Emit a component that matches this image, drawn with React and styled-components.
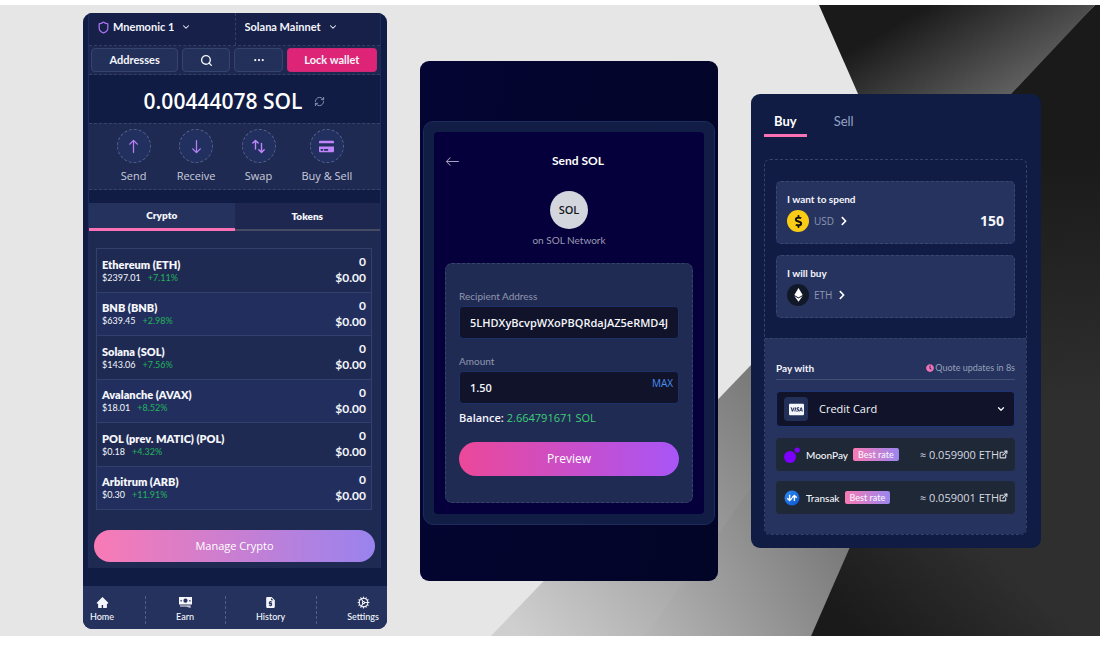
import React, { useState } from "react";
import styled, { createGlobalStyle, css } from "styled-components";
import { RefreshCw, Shield, Search, ChevronDown, Cog } from "lucide-react";
import { BsArrowUp, BsArrowDown, BsArrowLeft, BsThreeDots } from "react-icons/bs";
import { FaCcVisa, FaChevronRight, FaClock, FaCreditCard, FaDollarSign } from "react-icons/fa";
import { MdRequestQuote } from "react-icons/md";
import { AiFillHome } from "react-icons/ai";
import { FiExternalLink } from "react-icons/fi";

const GlobalStyle = createGlobalStyle`
  * { box-sizing: border-box; }
  body {
    margin: 0;
    background: #fff;
    color: #f5f6fb;
    font-family: "Open Sans", "Noto Sans", sans-serif;
    font-size: 11px;
    line-height: 16px;
  }
  button, input, select { font: inherit; color: inherit; margin: 0; }
  button { cursor: pointer; border: 0; padding: 0; background: none; }
  h1, h2, p { margin: 0; font-size: inherit; font-weight: inherit; }
  a { color: inherit; text-decoration: none; }
  svg { display: block; flex: none; }
`;

const compact = css`
  font-family: Lato, "Noto Sans", sans-serif;
`;

const Stage = styled.main`
  position: relative;
  margin: 5px 1px 20px 0;
  padding: 8px 59px 7px 83px;
  display: grid;
  grid-template-columns: minmax(0, 304fr) minmax(0, 298fr) minmax(0, 290fr);
  gap: 33px;
  align-items: center;
  background: #e6e6e6;
`;

const Backdrop = styled.svg`
  position: absolute;
  inset: 0;
  width: 100%;
  height: 100%;
`;

const Card = styled.section`
  position: relative;
  min-width: 0;
  border-radius: 9px;
  overflow: hidden;
  background: #101c44;
`;

/* ---------- wallet ---------- */

const WalletBody = styled.div`
  margin: 0 6px 18px 5px;
  border: solid #1b2c5f;
  border-width: 0 1px;
`;

const TopBar = styled.div`
  ${compact}
  display: grid;
  grid-template-columns: 1fr 1fr;
  height: 33px;
  background: #162049;
  border-bottom: 1px dashed #333f68;
`;

const Picker = styled.label`
  display: flex;
  align-items: center;
  gap: 3px;
  padding: 0 9px 4px 8px;
  font-weight: 700;
  & + & {
    padding-left: 9px;
    border-left: 1px dashed #333f68;
  }
`;

const BareSelect = styled.select`
  appearance: none;
  border: 0;
  padding: 0;
  background: none;
  outline: 0;
  min-width: 0;
  field-sizing: content;
  flex: ${(p) => (p.$grow ? "1" : "none")};
  option { color: #111; }
`;

const PickerArrow = styled(ChevronDown)`
  margin-left: 4px;
  pointer-events: none;
`;

const Toolbar = styled.div`
  ${compact}
  display: grid;
  grid-template-columns: 87fr 48fr 48fr 90fr;
  gap: 4px;
  height: 29px;
  padding: 2px 3px 2px 2px;
  background: #1d2750;
  border-bottom: 1px dashed #333f68;
`;

const ToolButton = styled.button`
  display: flex;
  align-items: center;
  justify-content: center;
  height: 24px;
  border-radius: 4px;
  border: 1px solid #35446f;
  background: #233059;
  font-weight: 700;
  ${(p) => p.$accent && css`
    background: #dd2476;
    border: 1px dashed #c22a78;
  `}
`;

const Balance = styled.div`
  display: flex;
  align-items: center;
  justify-content: center;
  gap: 12px;
  height: 48px;
  padding-top: 4px;
  color: #8e9ab8;
`;

const BalanceValue = styled.h1`
  color: #fff;
  font-size: 21px;
  line-height: 28px;
  font-weight: 600;
`;

const Actions = styled.div`
  display: flex;
  justify-content: center;
  gap: 26px;
  height: 67px;
  padding-top: 5px;
  background: #1f2a53;
  border: dashed #37436b;
  border-width: 1px 0;
`;

const Action = styled.button`
  display: flex;
  flex-direction: column;
  align-items: center;
  gap: 5px;
  color: #c9cdda;
`;

const ActionDisc = styled.span`
  display: grid;
  place-items: center;
  width: 34px;
  height: 34px;
  border-radius: 50%;
  border: 1px dashed #56608a;
  background: #22305f;
  color: #c084fc;
`;

const WalletTabs = styled.div`
  ${compact}
  display: grid;
  grid-template-columns: 1fr 1fr;
  height: 28px;
  margin-top: 13px;
`;

const WalletTab = styled.button`
  font-size: 10px;
  font-weight: 800;
  padding-bottom: 1px;
  background: ${(p) => (p.$active ? "#24325d" : "#1d2750")};
  border-bottom: ${(p) => (p.$active ? "3px solid #fb71b6" : "2px solid #454b63")};
`;

const AssetPanel = styled.div`
  padding: 17px 5px 6px;
  background: #1f2a53;
`;

const AssetTableWrap = styled.div`
  padding: 0 3px 0 2px;
`;

const AssetTable = styled.table`
  ${compact}
  width: 100%;
  height: 262px;
  border-collapse: collapse;
  border: 1px solid #32406c;
  th, td {
    padding: 0 5px;
    border-bottom: 1px solid #32406c;
    text-align: left;
    font-weight: 400;
    line-height: 14px;
  }
  td { text-align: right; font-size: 12px; font-weight: 700; line-height: 16px; }
  tr:nth-child(even) { background: #222f5e; }
`;

const AssetName = styled.div`
  font-size: 11px;
  font-weight: 800;
`;

const AssetQuote = styled.div`
  display: flex;
  gap: 7px;
  font-size: 9px;
  line-height: 11px;
  span { color: #22b45c; }
`;

const PillButton = styled.button`
  display: block;
  width: 100%;
  height: ${(p) => (p.$tall ? "34px" : "32px")};
  margin-top: ${(p) => (p.$tall ? "16px" : "20px")};
  border-radius: 17px;
  color: #fff;
  font-size: ${(p) => (p.$tall ? "12px" : "11px")};
  font-weight: 500;
  background: linear-gradient(90deg, ${(p) => p.$from}, ${(p) => p.$to});
`;

const BottomNav = styled.nav`
  ${compact}
  display: flex;
  justify-content: space-between;
  height: 43px;
  padding: 10px 8px 5px 7px;
  background: #24325d;
`;

const NavLink = styled.a`
  display: flex;
  flex-direction: column;
  align-items: center;
  gap: 1px;
  font-size: 9px;
  font-weight: 500;
  line-height: 14px;
`;

const NavRule = styled.span`
  border-left: 1px dashed #525e86;
`;

/* ---------- send ---------- */

const SendCard = styled(Card)`
  padding: 60px 3px 56px;
  background: linear-gradient(100deg, #040533 0%, #020526 100%);
`;

const SendFrame = styled.div`
  padding: 10px;
  border: 1px solid #1b2c5f;
  border-radius: 10px;
  background: #111d45;
`;

const SendInner = styled.div`
  padding: 19px 11px 11px;
  border-radius: 4px;
  background: #05003b;
`;

const SendHeader = styled.header`
  display: flex;
  align-items: center;
  gap: 3px;
  height: 20px;
  color: #9fa2bd;
`;

const SendTitle = styled.h2`
  ${compact}
  flex: 1;
  text-align: center;
  color: #fff;
  font-size: 12px;
  font-weight: 700;
`;

const CoinBadge = styled.div`
  display: grid;
  place-items: center;
  width: 38px;
  height: 38px;
  margin: 20px auto 0;
  border-radius: 50%;
  background: #d3d6dd;
  color: #14161d;
  font-weight: 600;
`;

const NetworkNote = styled.p`
  ${compact}
  margin: 3px 0 15px;
  text-align: center;
  font-size: 10px;
  color: #989bb2;
`;

const SendForm = styled.form`
  padding: 25px 13px 26px;
  border: 1px dashed #37436b;
  border-radius: 7px;
  background: #202b54;
`;

const FieldLabel = styled.label`
  ${compact}
  display: block;
  margin-bottom: 2px;
  font-size: 10px;
  line-height: 15px;
  color: #9097ad;
`;

const InputShell = styled.div`
  display: flex;
  height: 33px;
  margin-bottom: ${(p) => (p.$last ? "6px" : "15px")};
  padding: 0 5px 0 10px;
  border: 1px solid #1d3068;
  border-radius: 4px;
  background: #10132a;
`;

const TextInput = styled.input`
  flex: 1;
  min-width: 0;
  border: 0;
  padding: 0;
  outline: 0;
  background: none;
  font-size: ${(p) => (p.$large ? "14px" : "11px")};
  font-weight: ${(p) => (p.$large ? 700 : 600)};
  text-align: ${(p) => (p.$large ? "right" : "left")};
`;

const MaxButton = styled.button`
  align-self: flex-start;
  margin-top: 3px;
  font-size: 10px;
  color: #4b8ef0;
`;

const BalanceLine = styled.p`
  font-weight: 600;
  span { color: #3dcf74; font-weight: 400; }
`;

/* ---------- buy ---------- */

const BuyCard = styled(Card)`
  padding: 10px 14px 13px 13px;
`;

const BuyTabs = styled.div`
  ${compact}
  display: flex;
  gap: 17px;
  margin-bottom: 22px;
`;

const BuyTab = styled.button`
  height: 33px;
  padding: 3px 10px 0;
  font-size: 13px;
  font-weight: ${(p) => (p.$active ? 700 : 400)};
  color: ${(p) => (p.$active ? "#fff" : "#93a3c4")};
  border-bottom: 3px solid ${(p) => (p.$active ? "#fb71b6" : "transparent")};
`;

const BuyPanel = styled.div`
  border: 1px dashed #35426a;
  border-radius: 6px;
  overflow: hidden;
`;

const TradeFields = styled.div`
  display: grid;
  grid-template-columns: minmax(0, 1fr);
  gap: 11px;
  padding: 21px 11px 20px;
`;

const TradeBox = styled.div`
  height: 63px;
  padding: 9px 10px;
  border: 1px dashed #3a4772;
  border-radius: 5px;
  background: #25335e;
  font-size: 10px;
`;

const TradeLabel = styled.label`
  ${compact}
  display: block;
  font-weight: 700;
`;

const TradeRow = styled.div`
  display: flex;
  align-items: center;
  gap: 5px;
  margin-top: 3px;
`;

const CoinPicker = styled.button`
  display: flex;
  align-items: center;
  gap: 5px;
  color: #8e97b2;
  svg { color: #fff; }
`;

const CoinDisc = styled.span`
  display: grid;
  place-items: center;
  width: 22px;
  height: 22px;
  border-radius: 50%;
  background: ${(p) => p.$bg};
  && svg { color: #111; }
`;

const PaySection = styled.div`
  padding: 20px 11px;
  border-top: 1px dashed #35426a;
  background: #25335e;
`;

const PayHeader = styled.div`
  ${compact}
  display: flex;
  align-items: center;
  justify-content: space-between;
  height: 21px;
  margin-bottom: 11px;
  padding-bottom: 2px;
  border-bottom: 1px solid #434e72;
`;

const PayTitle = styled.label`
  font-size: 10px;
  font-weight: 700;
`;

const QuoteNote = styled.span`
  display: flex;
  align-items: center;
  gap: 1px;
  font-size: 9px;
  color: #97a0ba;
  svg { color: #f472b6; }
`;

const PayPicker = styled.div`
  display: flex;
  align-items: center;
  gap: 11px;
  height: 36px;
  padding: 0 8px 0 7px;
  border: 1px solid #1d3475;
  border-radius: 4px;
  background: #10132a;
`;

const PayIcon = styled.span`
  display: grid;
  place-items: center;
  width: 24px;
  height: 24px;
  border-radius: 4px;
  background: #222f59;
`;

const Offer = styled.button`
  ${compact}
  display: flex;
  align-items: center;
  gap: 5px;
  width: 100%;
  height: 33px;
  margin-top: ${(p) => (p.$first ? "11px" : "10px")};
  padding: 0 7px 0 8px;
  border-radius: 4px;
  background: #1f2836;
  font-size: 10px;
  font-weight: 500;
`;

const OfferName = styled.span`
  margin-left: 1px;
`;

const RateTag = styled.span`
  padding: 0 5px;
  border-radius: 2px;
  font-size: 9px;
  line-height: 13px;
  background: linear-gradient(90deg, #f97ab5, #9b86ee);
`;

const OfferAmount = styled.span`
  display: flex;
  align-items: center;
  margin-left: auto;
  font-family: "Open Sans", sans-serif;
  font-size: 11px;
  font-weight: 400;
  color: #d5d9e3;
`;

/* ---------- drawn icons ---------- */

const SwapIcon = () => (
  <svg width="15" height="15" viewBox="0 0 15 15" fill="none" stroke="currentColor" strokeWidth="1.4" strokeLinecap="round" strokeLinejoin="round">
    <path d="M4.5 10V1.5M1.8 4.1 4.5 1.4l2.7 2.7M10.5 4.5v9M7.8 10.8l2.7 2.7 2.7-2.7" />
  </svg>
);

const CashIcon = () => (
  <svg width="13" height="13" viewBox="0 0 13 13">
    <path fill="currentColor" fillRule="evenodd" d="M0 1h13v7.4H0zM6.5 2.6a2.1 2.1 0 1 0 0 4.2 2.1 2.1 0 0 0 0-4.2zM1.5 4h1.2v1.4H1.5zM10.3 4h1.2v1.4h-1.2z" />
    <path fill="currentColor" d="M1 9.5h10.6v1H1zM7 10.8h4.6v1z" />
  </svg>
);

const EtherIcon = () => (
  <svg width="9" height="14" viewBox="0 0 9 14" fill="#fff">
    <path d="M4.5 0 8.7 7.1 4.5 9.6.3 7.1z" />
    <path d="M.3 8.1 4.5 10.6 8.7 8.1 4.5 13.8z" />
  </svg>
);

const MoonPayIcon = () => (
  <svg width="16" height="16" viewBox="0 0 16 16" fill="#7d00ff">
    <circle cx="6" cy="10" r="6" />
    <circle cx="13.2" cy="3" r="2.6" />
  </svg>
);

const TransakIcon = () => (
  <svg width="16" height="16" viewBox="0 0 16 16">
    <defs>
      <linearGradient id="transak" x1="0" y1="0" x2="1" y2="1">
        <stop offset="0" stopColor="#2d8cf5" />
        <stop offset="1" stopColor="#0b55d0" />
      </linearGradient>
    </defs>
    <circle cx="8" cy="8" r="7.5" fill="url(#transak)" />
    <path d="M5.6 4.8v5.6M3.2 8.2l2.4 2.4L8 8.2M10.4 11V5.5M8 7.8l2.4-2.4 2.4 2.4" fill="none" stroke="#fff" strokeWidth="1.4" />
  </svg>
);

const assets = [
  ["Ethereum (ETH)", "$2397.01", "+7.11%"],
  ["BNB (BNB)", "$639.45", "+2.98%"],
  ["Solana (SOL)", "$143.06", "+7.56%"],
  ["Avalanche (AVAX)", "$18.01", "+8.52%"],
  ["POL (prev. MATIC) (POL)", "$0.18", "+4.32%"],
  ["Arbitrum (ARB)", "$0.30", "+11.91%"],
];

const actions = [
  ["Send", <BsArrowUp size={15} stroke="currentColor" strokeWidth={0.3} />],
  ["Receive", <BsArrowDown size={15} stroke="currentColor" strokeWidth={0.3} />],
  ["Swap", <SwapIcon />],
  ["Buy & Sell", <FaCreditCard size={15} />],
];

const navItems = [
  ["Home", <AiFillHome size={13} />],
  ["Earn", <CashIcon />],
  ["History", <MdRequestQuote size={13} />],
  ["Settings", <Cog size={13} />],
];

function Wallet() {
  const [tab, setTab] = useState("Crypto");
  return (
    <Card>
      <WalletBody>
        <TopBar>
          <Picker>
            <Shield size={13} strokeWidth={2.3} color="#a974f0" />
            <BareSelect aria-label="Wallet"><option>Mnemonic 1</option></BareSelect>
            <PickerArrow size={10} strokeWidth={2.5} />
          </Picker>
          <Picker>
            <BareSelect aria-label="Network"><option>Solana Mainnet</option></BareSelect>
            <PickerArrow size={10} strokeWidth={2.5} />
          </Picker>
        </TopBar>
        <Toolbar>
          <ToolButton>Addresses</ToolButton>
          <ToolButton aria-label="Search"><Search size={13} strokeWidth={2.5} /></ToolButton>
          <ToolButton aria-label="More"><BsThreeDots size={12} /></ToolButton>
          <ToolButton $accent>Lock wallet</ToolButton>
        </Toolbar>
        <Balance>
          <BalanceValue>0.00444078 SOL</BalanceValue>
          <button aria-label="Refresh"><RefreshCw size={11} /></button>
        </Balance>
        <Actions>
          {actions.map(([label, icon]) => (
            <Action key={label}><ActionDisc>{icon}</ActionDisc>{label}</Action>
          ))}
        </Actions>
        <WalletTabs>
          {["Crypto", "Tokens"].map((name) => (
            <WalletTab key={name} $active={tab === name} onClick={() => setTab(name)}>{name}</WalletTab>
          ))}
        </WalletTabs>
        <AssetPanel>
          <AssetTableWrap>
            <AssetTable>
              <tbody>
                {assets.map(([name, price, change]) => (
                  <tr key={name}>
                    <th scope="row">
                      <AssetName>{name}</AssetName>
                      <AssetQuote>{price}<span>{change}</span></AssetQuote>
                    </th>
                    <td>0<br />$0.00</td>
                  </tr>
                ))}
              </tbody>
            </AssetTable>
          </AssetTableWrap>
          <PillButton $from="#f97ab5" $to="#9983ee">Manage Crypto</PillButton>
        </AssetPanel>
      </WalletBody>
      <BottomNav>
        {navItems.map(([label, icon], i) => (
          <React.Fragment key={label}>
            {i > 0 && <NavRule />}
            <NavLink href="#">{icon}{label}</NavLink>
          </React.Fragment>
        ))}
      </BottomNav>
    </Card>
  );
}

function Send() {
  return (
    <SendCard>
      <SendFrame>
        <SendInner>
          <SendHeader>
            <button aria-label="Back"><BsArrowLeft size={15} /></button>
            <SendTitle>Send SOL</SendTitle>
          </SendHeader>
          <CoinBadge>SOL</CoinBadge>
          <NetworkNote>on SOL Network</NetworkNote>
          <SendForm onSubmit={(e) => e.preventDefault()}>
            <FieldLabel htmlFor="recipient">Recipient Address</FieldLabel>
            <InputShell>
              <TextInput id="recipient" defaultValue="5LHDXyBcvpWXoPBQRdaJAZ5eRMD4J" />
            </InputShell>
            <FieldLabel htmlFor="amount">Amount</FieldLabel>
            <InputShell $last>
              <TextInput id="amount" defaultValue="1.50" />
              <MaxButton type="button">MAX</MaxButton>
            </InputShell>
            <BalanceLine>Balance: <span>2.664791671 SOL</span></BalanceLine>
            <PillButton $tall $from="#ec4899" $to="#a855f7">Preview</PillButton>
          </SendForm>
        </SendInner>
      </SendFrame>
    </SendCard>
  );
}

function Buy() {
  const [tab, setTab] = useState("Buy");
  return (
    <BuyCard>
      <BuyTabs>
        {["Buy", "Sell"].map((name) => (
          <BuyTab key={name} $active={tab === name} onClick={() => setTab(name)}>{name}</BuyTab>
        ))}
      </BuyTabs>
      <BuyPanel>
        <TradeFields>
          <TradeBox>
            <TradeLabel htmlFor="spend">I want to spend</TradeLabel>
            <TradeRow>
              <CoinPicker>
                <CoinDisc $bg="#facc15"><FaDollarSign size={13} /></CoinDisc>USD<FaChevronRight size={10} />
              </CoinPicker>
              <TextInput id="spend" $large defaultValue="150" />
            </TradeRow>
          </TradeBox>
          <TradeBox>
            <TradeLabel htmlFor="coin">I will buy</TradeLabel>
            <TradeRow>
              <CoinPicker id="coin">
                <CoinDisc $bg="#111827"><EtherIcon /></CoinDisc>ETH<FaChevronRight size={10} />
              </CoinPicker>
            </TradeRow>
          </TradeBox>
        </TradeFields>
        <PaySection>
          <PayHeader>
            <PayTitle htmlFor="method">Pay with</PayTitle>
            <QuoteNote><FaClock size={8} />Quote updates in 8s</QuoteNote>
          </PayHeader>
          <PayPicker>
            <PayIcon><FaCcVisa size={15} /></PayIcon>
            <BareSelect id="method" $grow><option>Credit Card</option></BareSelect>
            <ChevronDown size={10} strokeWidth={3} />
          </PayPicker>
          <Offer $first>
            <MoonPayIcon /><OfferName>MoonPay</OfferName><RateTag>Best rate</RateTag>
            <OfferAmount>≈ 0.059900 ETH<FiExternalLink size={9} strokeWidth={3} /></OfferAmount>
          </Offer>
          <Offer>
            <TransakIcon /><OfferName>Transak</OfferName><RateTag>Best rate</RateTag>
            <OfferAmount>≈ 0.059001 ETH<FiExternalLink size={9} strokeWidth={3} /></OfferAmount>
          </Offer>
        </PaySection>
      </BuyPanel>
    </BuyCard>
  );
}

export default function App() {
  return (
    <>
      <GlobalStyle />
      <Stage>
        <Backdrop viewBox="0 0 1100 631" preserveAspectRatio="none" aria-hidden="true">
          <defs>
            <linearGradient id="band" gradientUnits="userSpaceOnUse" x1="520" y1="631" x2="800" y2="400">
              <stop offset="0" stopColor="#cfcfcf" />
              <stop offset="1" stopColor="#757575" />
            </linearGradient>
            <linearGradient id="bandDark" gradientUnits="userSpaceOnUse" x1="650" y1="631" x2="830" y2="520">
              <stop offset="0" stopColor="#b4b4b4" />
              <stop offset="1" stopColor="#7a7a7a" />
            </linearGradient>
            <linearGradient id="dark" gradientUnits="userSpaceOnUse" x1="860" y1="631" x2="960" y2="520">
              <stop offset="0" stopColor="#1a1a1a" />
              <stop offset="1" stopColor="#2f2f2f" />
            </linearGradient>
            <linearGradient id="darkTop" gradientUnits="userSpaceOnUse" x1="1080" y1="150" x2="1100" y2="400">
              <stop offset="0" stopColor="#1a1a1a" />
              <stop offset="1" stopColor="#2f2f2f" />
            </linearGradient>
            <linearGradient id="shine" gradientUnits="userSpaceOnUse" x1="895" y1="20" x2="960" y2="130">
              <stop offset="0" stopColor="#1a1a1a" />
              <stop offset="1" stopColor="#666666" />
            </linearGradient>
          </defs>
          <path d="M491 631 751 360 953 306 811 631z" fill="url(#band)" />
          <path d="M645 631 751 483 953 306 811 631z" fill="url(#bandDark)" />
          <path d="M811 631 953 306H1100V631z" fill="url(#dark)" />
          <path d="M953 306 1100 0V450H953z" fill="url(#darkTop)" />
          <path d="M1095 0H1100V310H953L900 190z" fill="url(#darkTop)" />
          <path d="M819 0H1095L917 189 902 189z" fill="url(#shine)" />
        </Backdrop>
        <Wallet />
        <Send />
        <Buy />
      </Stage>
    </>
  );
}
